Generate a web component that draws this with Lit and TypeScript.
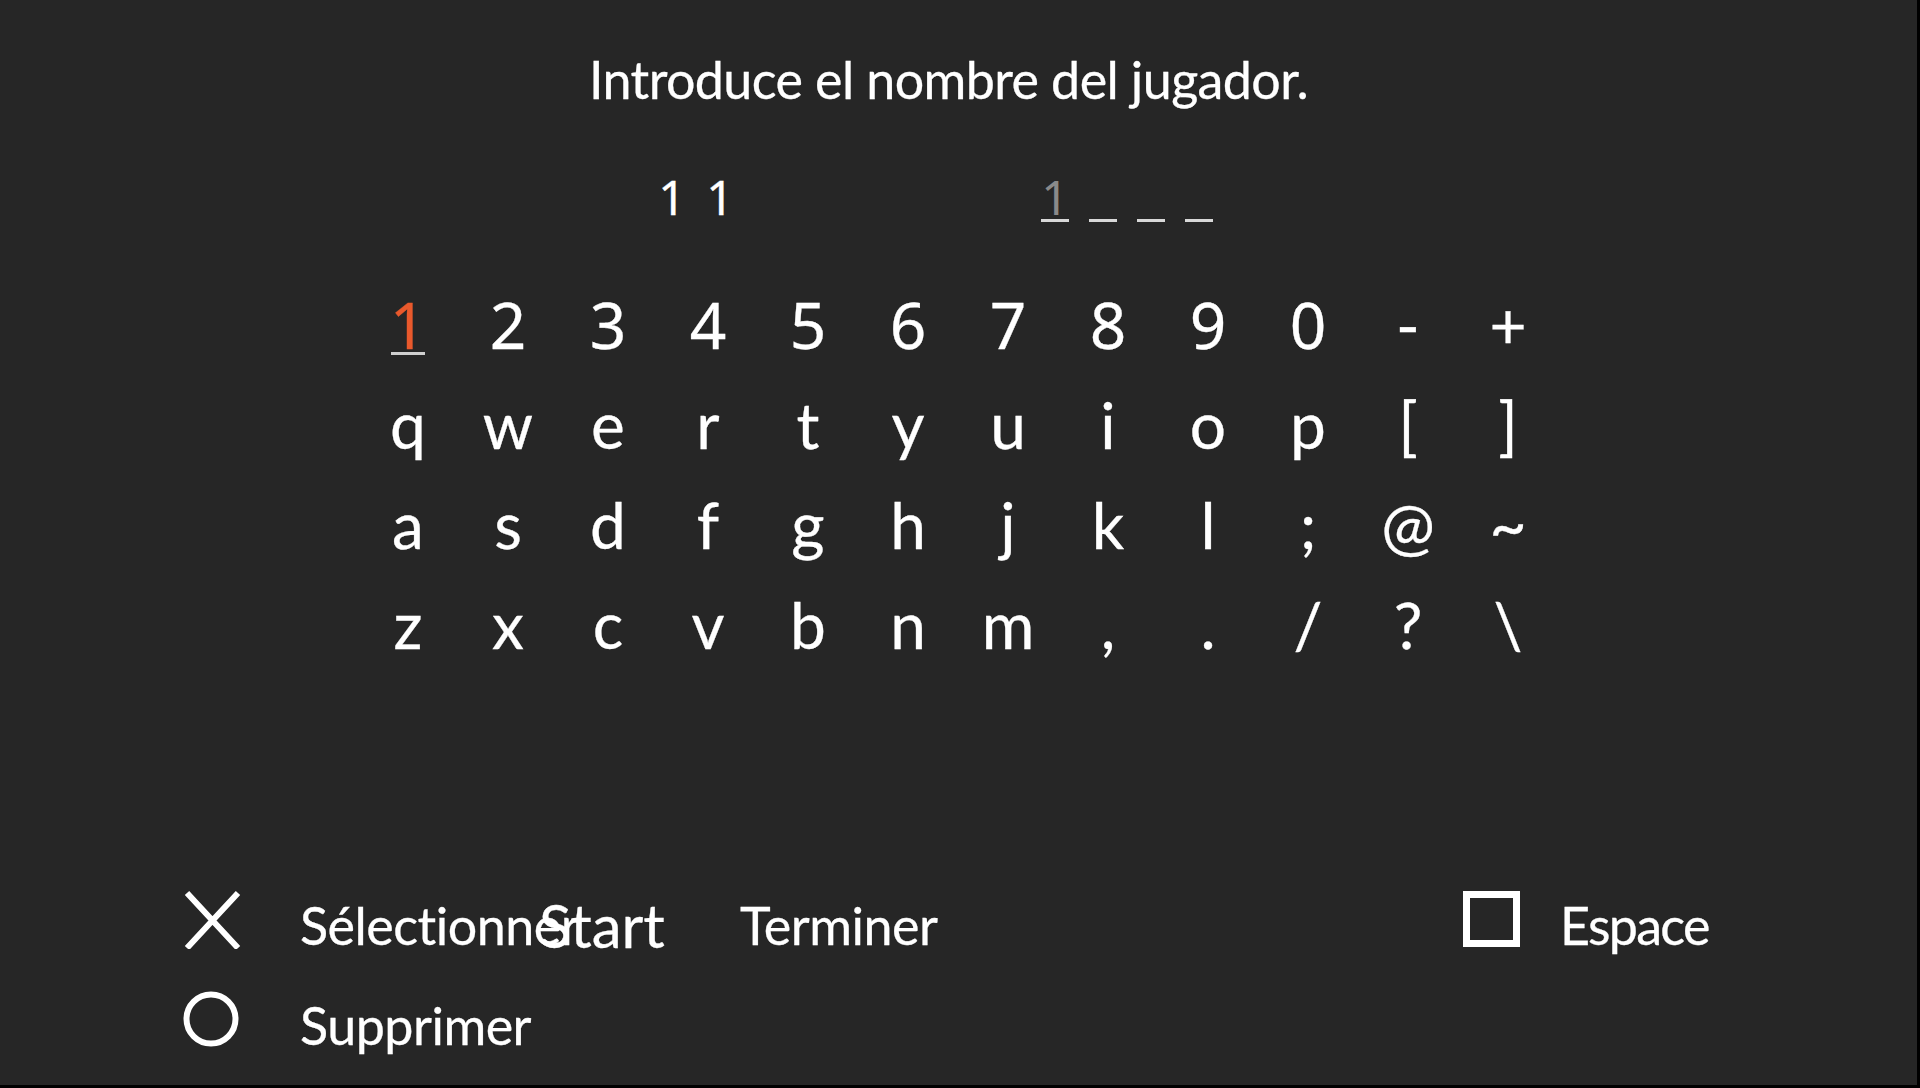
import { LitElement, html, css, svg } from "lit";
import { customElement } from "lit/decorators.js";

const ROWS = [
  ["1","2","3","4","5","6","7","8","9","0","-","+"],
  ["q","w","e","r","t","y","u","i","o","p","[","]"],
  ["a","s","d","f","g","h","j","k","l",";","@","~"],
  ["z","x","c","v","b","n","m",",",".","/","?","\\"],
];

@customElement("app-root")
export class AppRoot extends LitElement {
  static styles = css`
    :host { display: block; width: 1920px; height: 1088px; background: #000; overflow: hidden; }
    .screen {
      width: 1917px; height: 1085px; background: #262626; color: #fff;
      font-family: Lato, "Noto Sans", sans-serif; box-sizing: border-box;
      padding-top: 49px; display: flex; flex-direction: column; overflow: hidden;
      -webkit-text-stroke: 0.3px #fff;
    }
    .title { font-size: 52px; line-height: 60px; padding-left: 589px; white-space: nowrap; letter-spacing: -0.6px; }
    .entry { display: flex; margin-top: 58px; padding-left: 648px; font-family: "Noto Sans", sans-serif; font-size: 48px; line-height: 60px; }
    .typed { display: flex; width: 383px; }
    .cell { width: 48px; text-align: center; }
    .slots { display: flex; }
    .slot { position: relative; width: 48px; height: 60px; text-align: center; color: #8a8a8a; -webkit-text-stroke: 0; }
    .slot::after { content: ""; position: absolute; left: 10px; width: 28px; top: 52px; height: 3px; background: #d8d8d8; }
    .keys { margin-top: 48px; margin-left: 358px; display: grid; grid-template-columns: repeat(12, 100px); grid-auto-rows: 100px; font-size: 64px; line-height: 100px; text-align: center; }
    .key { position: relative; }
    .key.digit { font-family: "Noto Sans", sans-serif; }
    .key.sel { color: #e9592c; -webkit-text-stroke: 0.3px #e9592c; }
    .key.sel::after { content: ""; position: absolute; left: 33px; width: 34px; top: 77px; height: 3px; background: #cfcfcf; }
    .foot { margin-top: 200px; margin-left: 183px; display: grid; grid-template-columns: 117px 239px 201px 723px 97px auto; grid-auto-rows: 100px; font-size: 52px; line-height: 100px; white-space: nowrap; }
    .foot svg { display: block; width: 60px; height: 60px; margin-top: 14px; }
    .start { font-size: 60px; }
    .label { letter-spacing: -0.5px; }
    .label.tight { letter-spacing: -1.7px; }
  `;

  private icon(body: unknown) {
    return html`<svg viewBox="0 0 60 60" fill="none" stroke="#fff">${body}</svg>`;
  }

  render() {
    return html`<div class="screen">
      <div class="title">Introduce el nombre del jugador.</div>
      <div class="entry">
        <div class="typed"><span class="cell">1</span><span class="cell">1</span></div>
        <div class="slots">
          <span class="slot">1</span><span class="slot"></span><span class="slot"></span><span class="slot"></span>
        </div>
      </div>
      <div class="keys">
        ${ROWS.flat().map((k, i) => html`<span class="key ${i === 0 ? "sel" : ""} ${i < 10 ? "digit" : ""}">${k}</span>`)}
      </div>
      <div class="foot">
        ${this.icon(svg`<path d="M4 4 L55 59 M55 4 L4 59" stroke-width="6"/>`)}
        <span class="label">Sélectionner</span>
        <span class="start">Start</span>
        <span class="label">Terminer</span>
        ${this.icon(svg`<rect x="3.5" y="5.5" width="50" height="49" stroke-width="7"/>`)}
        <span class="label tight">Espace</span>
        ${this.icon(svg`<circle cx="28" cy="30" r="24.5" stroke-width="6"/>`)}
        <span class="label">Supprimer</span>
      </div>
    </div>`;
  }
}
